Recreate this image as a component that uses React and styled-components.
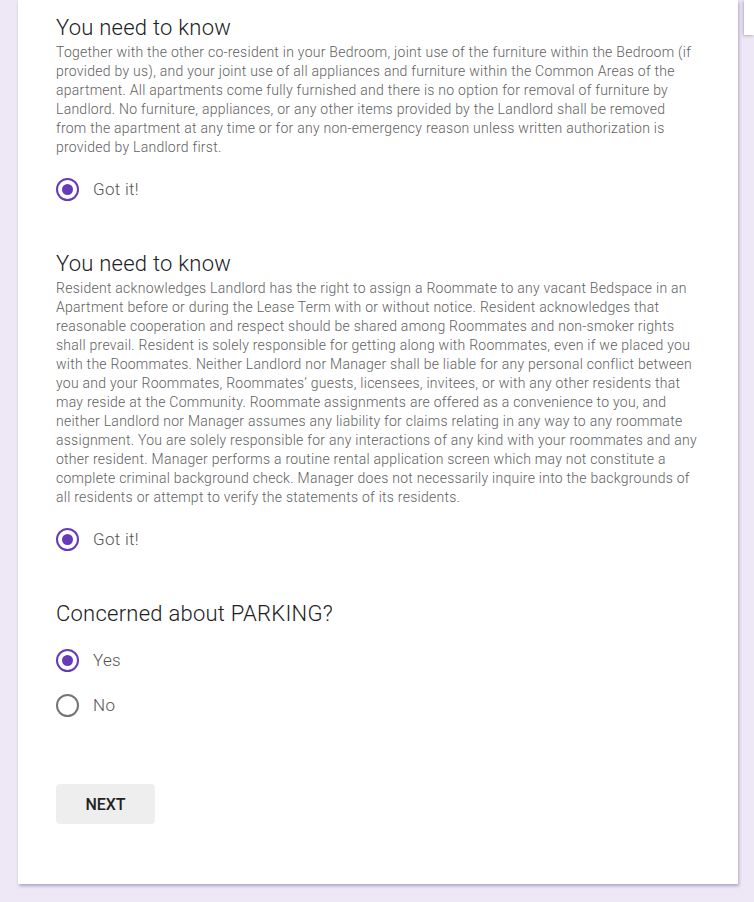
import React, { useState } from 'react'
import styled, { createGlobalStyle } from 'styled-components'

const GlobalStyle = createGlobalStyle`
  html, body {
    margin: 0;
    padding: 0;
    background: #ede7f6;
    font-family: Roboto, 'Liberation Sans', Arial, sans-serif;
  }
`

const Page = styled.div`
  padding: 0 16px 17px 18px;
`

const Card = styled.div`
  width: 720px;
  box-sizing: border-box;
  background: #fff;
  padding: 14px 40px 60px 38px;
  box-shadow: 1px 2px 3px rgba(60, 40, 90, 0.35);
`

const SideTab = styled.div`
  position: fixed;
  top: 0;
  right: 0;
  width: 10px;
  height: 35px;
  background: #fff;
  box-shadow: -1px 1px 3px rgba(60, 40, 90, 0.3);
`

const Section = styled.section`
  & + & {
    margin-top: 49px;
  }
`

const Heading = styled.h2`
  margin: 0;
  font-size: 22px;
  line-height: 28px;
  font-weight: 300;
  letter-spacing: 0.25px;
  color: #202124;
`

const Body = styled.p`
  margin: 1px 0 0;
  font-size: 14px;
  line-height: 19px;
  font-weight: 300;
  letter-spacing: 0.26px;
  color: #616161;
`

const Options = styled.div`
  display: flex;
  flex-direction: column;
  gap: 21px;
  margin-top: 20px;
`

const Option = styled.label`
  display: flex;
  align-items: center;
  height: 24px;
  gap: 14px;
  cursor: pointer;
  font-size: 17px;
  font-weight: 300;
  letter-spacing: 0.3px;
  color: #555;
`

const Dot = styled.span`
  width: 23px;
  height: 23px;
  box-sizing: border-box;
  border-radius: 50%;
  border: 2px solid ${({ checked }) => (checked ? '#673ab7' : '#757575')};
  display: flex;
  align-items: center;
  justify-content: center;
  &::after {
    content: '';
    width: 11px;
    height: 11px;
    border-radius: 50%;
    background: #673ab7;
    display: ${({ checked }) => (checked ? 'block' : 'none')};
  }
`

const Actions = styled.div`
  margin-top: 67px;
`

const Button = styled.button`
  width: 99px;
  height: 40px;
  border: none;
  border-radius: 4px;
  background: #eeeeee;
  font-family: Roboto, 'Liberation Sans', Arial, sans-serif;
  font-size: 16px;
  font-weight: 500;
  color: #222;
  cursor: pointer;
`

const Radio = ({ checked, label, onSelect }) => (
  <Option onClick={onSelect}>
    <Dot checked={checked} />
    {label}
  </Option>
)

const App = () => {
  const [parking, setParking] = useState('Yes')
  return (
    <>
      <GlobalStyle />
      <SideTab />
      <Page>
        <Card>
          <Section>
            <Heading>You need to know</Heading>
            <Body>
              Together with the other co-resident in your Bedroom, joint use of the furniture within the Bedroom (if
              provided by us), and your joint use of all appliances and furniture within the Common Areas of the
              apartment. All apartments come fully furnished and there is no option for removal of furniture by
              Landlord. No furniture, appliances, or any other items provided by the Landlord shall be removed from
              the apartment at any time or for any non-emergency reason unless written authorization is provided by
              Landlord first.
            </Body>
            <Options>
              <Radio checked label="Got it!" />
            </Options>
          </Section>
          <Section>
            <Heading>You need to know</Heading>
            <Body>
              Resident acknowledges Landlord has the right to assign a Roommate to any vacant Bedspace in an Apartment
              before or during the Lease Term with or without notice. Resident acknowledges that reasonable cooperation
              and respect should be shared among Roommates and non-smoker rights shall prevail. Resident is solely
              responsible for getting along with Roommates, even if we placed you with the Roommates. Neither Landlord
              nor Manager shall be liable for any personal conflict between you and your Roommates, Roommates’ guests,
              licensees, invitees, or with any other residents that may reside at the Community. Roommate assignments
              are offered as a convenience to you, and neither Landlord nor Manager assumes any liability for claims
              relating in any way to any roommate assignment. You are solely responsible for any interactions of any
              kind with your roommates and any other resident. Manager performs a routine rental application screen
              which may not constitute a complete criminal background check. Manager does not necessarily inquire into
              the backgrounds of all residents or attempt to verify the statements of its residents.
            </Body>
            <Options>
              <Radio checked label="Got it!" />
            </Options>
          </Section>
          <Section>
            <Heading>Concerned about PARKING?</Heading>
            <Options>
              {['Yes', 'No'].map((v) => (
                <Radio key={v} label={v} checked={parking === v} onSelect={() => setParking(v)} />
              ))}
            </Options>
          </Section>
          <Actions>
            <Button>NEXT</Button>
          </Actions>
        </Card>
      </Page>
    </>
  )
}

export default App
